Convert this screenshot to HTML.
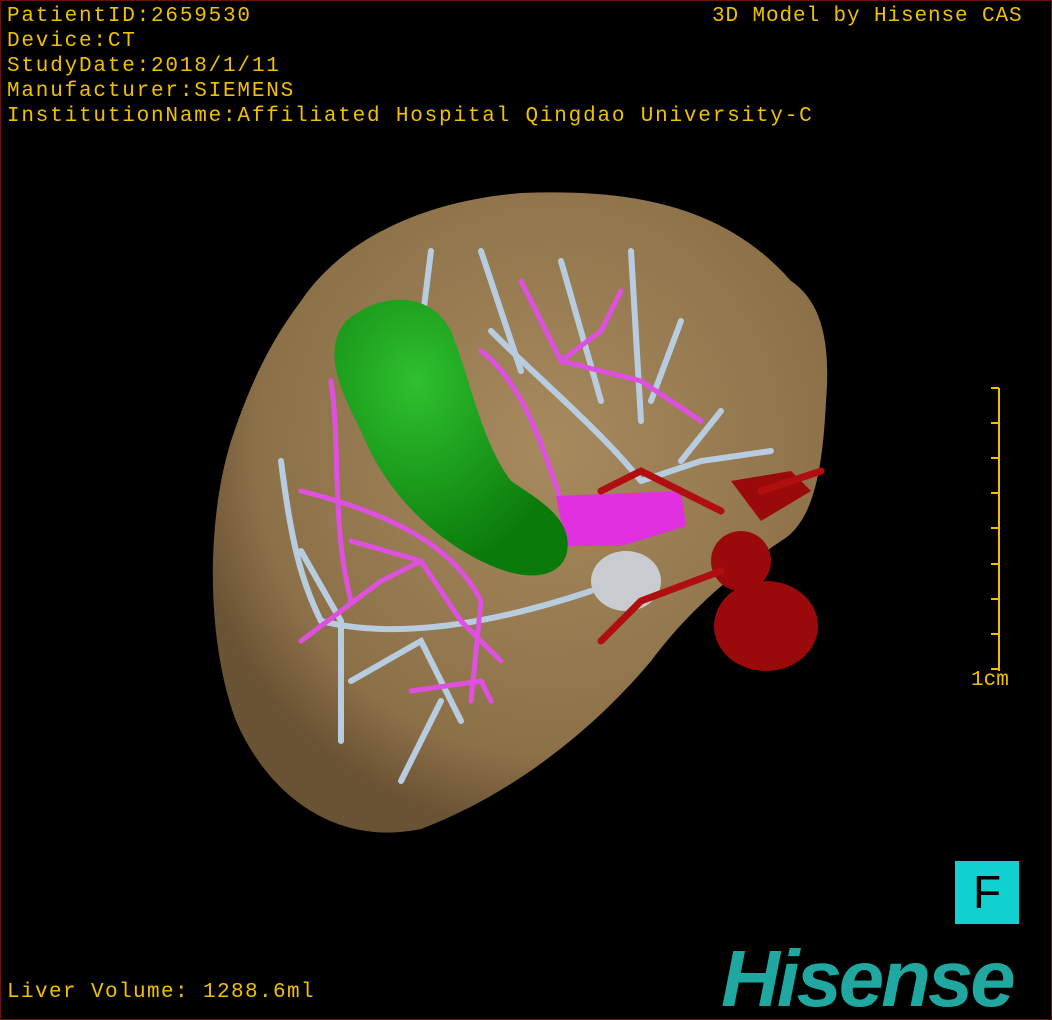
<!DOCTYPE html>
<html><head><style>
html,body{margin:0;padding:0;background:#000}
#w{position:relative;width:1050px;height:1018px;border:1px solid #6a1010;overflow:hidden;background:#000}
.t{position:absolute;color:#f0c000;font-family:"Liberation Mono",monospace;font-size:21px;line-height:25px;letter-spacing:1.8px;white-space:pre}
</style></head><body><div id="w">
<svg width="1050" height="1018" style="position:absolute;left:0;top:0">
<defs><radialGradient id="lv" cx="0.55" cy="0.4" r="0.6"><stop offset="0" stop-color="#a78a5e"/><stop offset="0.8" stop-color="#8c7048"/><stop offset="1" stop-color="#6a5234"/></radialGradient>
<radialGradient id="gb" cx="0.35" cy="0.3" r="0.7"><stop offset="0" stop-color="#2fc02f"/><stop offset="1" stop-color="#0a7a0a"/></radialGradient></defs>
<path d="M300,300 C340,240 420,200 520,192 C620,188 720,200 790,280 C820,300 830,340 825,400 C822,460 815,520 780,540 C720,580 680,620 650,660 C600,720 520,790 420,828 C340,845 270,800 235,720 C205,640 205,520 230,440 C250,380 270,340 300,300 Z" fill="url(#lv)"/>
<g fill="none" stroke="#b8cce0" stroke-width="6" stroke-linecap="round">
<path d="M320,620 C400,640 500,620 590,590"/><path d="M320,620 C300,580 290,540 280,460"/>
<path d="M490,330 C540,380 600,430 640,480"/><path d="M640,480 L700,460 L770,450"/>
<path d="M560,260 L600,400"/><path d="M630,250 L640,420"/><path d="M680,320 L650,400"/><path d="M480,250 L520,370"/>
<path d="M430,250 L420,330"/><path d="M350,680 L420,640 L460,720"/><path d="M400,780 L440,700"/><path d="M720,410 L680,460"/>
<path d="M300,550 L340,620 L340,740"/>
</g>
<g fill="none" stroke="#e050e0" stroke-width="5" stroke-linecap="round">
<path d="M330,380 C340,450 330,520 350,600"/><path d="M300,490 C380,510 450,540 480,600 L470,700"/>
<path d="M480,350 C520,380 540,440 560,500"/><path d="M520,280 L560,360 L600,330 L620,290"/>
<path d="M560,360 L640,380 L700,420"/><path d="M300,640 L380,580 L420,560"/><path d="M410,690 L480,680 L490,700"/>
<path d="M350,540 L420,560 L460,620 L500,660"/>
</g>
<path d="M555,495 L680,490 L685,525 L620,545 L565,545 Z" fill="#e030e0"/>
<ellipse cx="625" cy="580" rx="35" ry="30" fill="#c8ccd0"/>
<g fill="#9a0a0a"><ellipse cx="765" cy="625" rx="52" ry="45"/><ellipse cx="740" cy="560" rx="30" ry="30"/><path d="M730,480 L790,470 L810,490 L760,520 Z"/></g>
<g fill="none" stroke="#b00f0f" stroke-width="7" stroke-linecap="round"><path d="M720,570 L640,600 L600,640"/><path d="M600,490 L640,470 L680,490 L720,510"/><path d="M760,490 L820,470"/></g>
<path d="M345,320 C380,290 430,290 450,330 C470,380 480,440 510,480 C540,500 575,520 565,555 C555,580 520,580 480,560 C420,530 380,480 360,430 C340,390 320,350 345,320 Z" fill="url(#gb)"/>
<g stroke="#f0c000" stroke-width="2" fill="none"><path d="M998,387 V670"/><path d="M990,387h8M990,422h8M990,457h8M990,492h8M990,527h8M990,563h8M990,598h8M990,633h8M990,668h8"/></g>
</svg>
<div class="t" style="left:6px;top:3px">PatientID:2659530
Device:CT
StudyDate:2018/1/11
Manufacturer:SIEMENS
InstitutionName:Affiliated Hospital Qingdao University-C</div>
<div class="t" style="left:711px;top:3px;letter-spacing:0.9px">3D Model by Hisense CAS</div>
<div class="t" style="left:970px;top:667px;letter-spacing:0">1cm</div>
<div class="t" style="left:6px;top:979px;letter-spacing:1.4px">Liver Volume: 1288.6ml</div>
<div style="position:absolute;left:954px;top:860px;width:64px;height:63px;background:#10d0d0;color:#000;font:46px 'Liberation Sans',sans-serif;text-align:center;line-height:63px">F</div>
<div style="position:absolute;left:720px;top:940px;color:#20a8a0;font:italic bold 80px 'Liberation Sans',sans-serif;line-height:76px;letter-spacing:-3px;transform:scaleX(1.02);transform-origin:left top">Hisense</div>
</div></body></html>
